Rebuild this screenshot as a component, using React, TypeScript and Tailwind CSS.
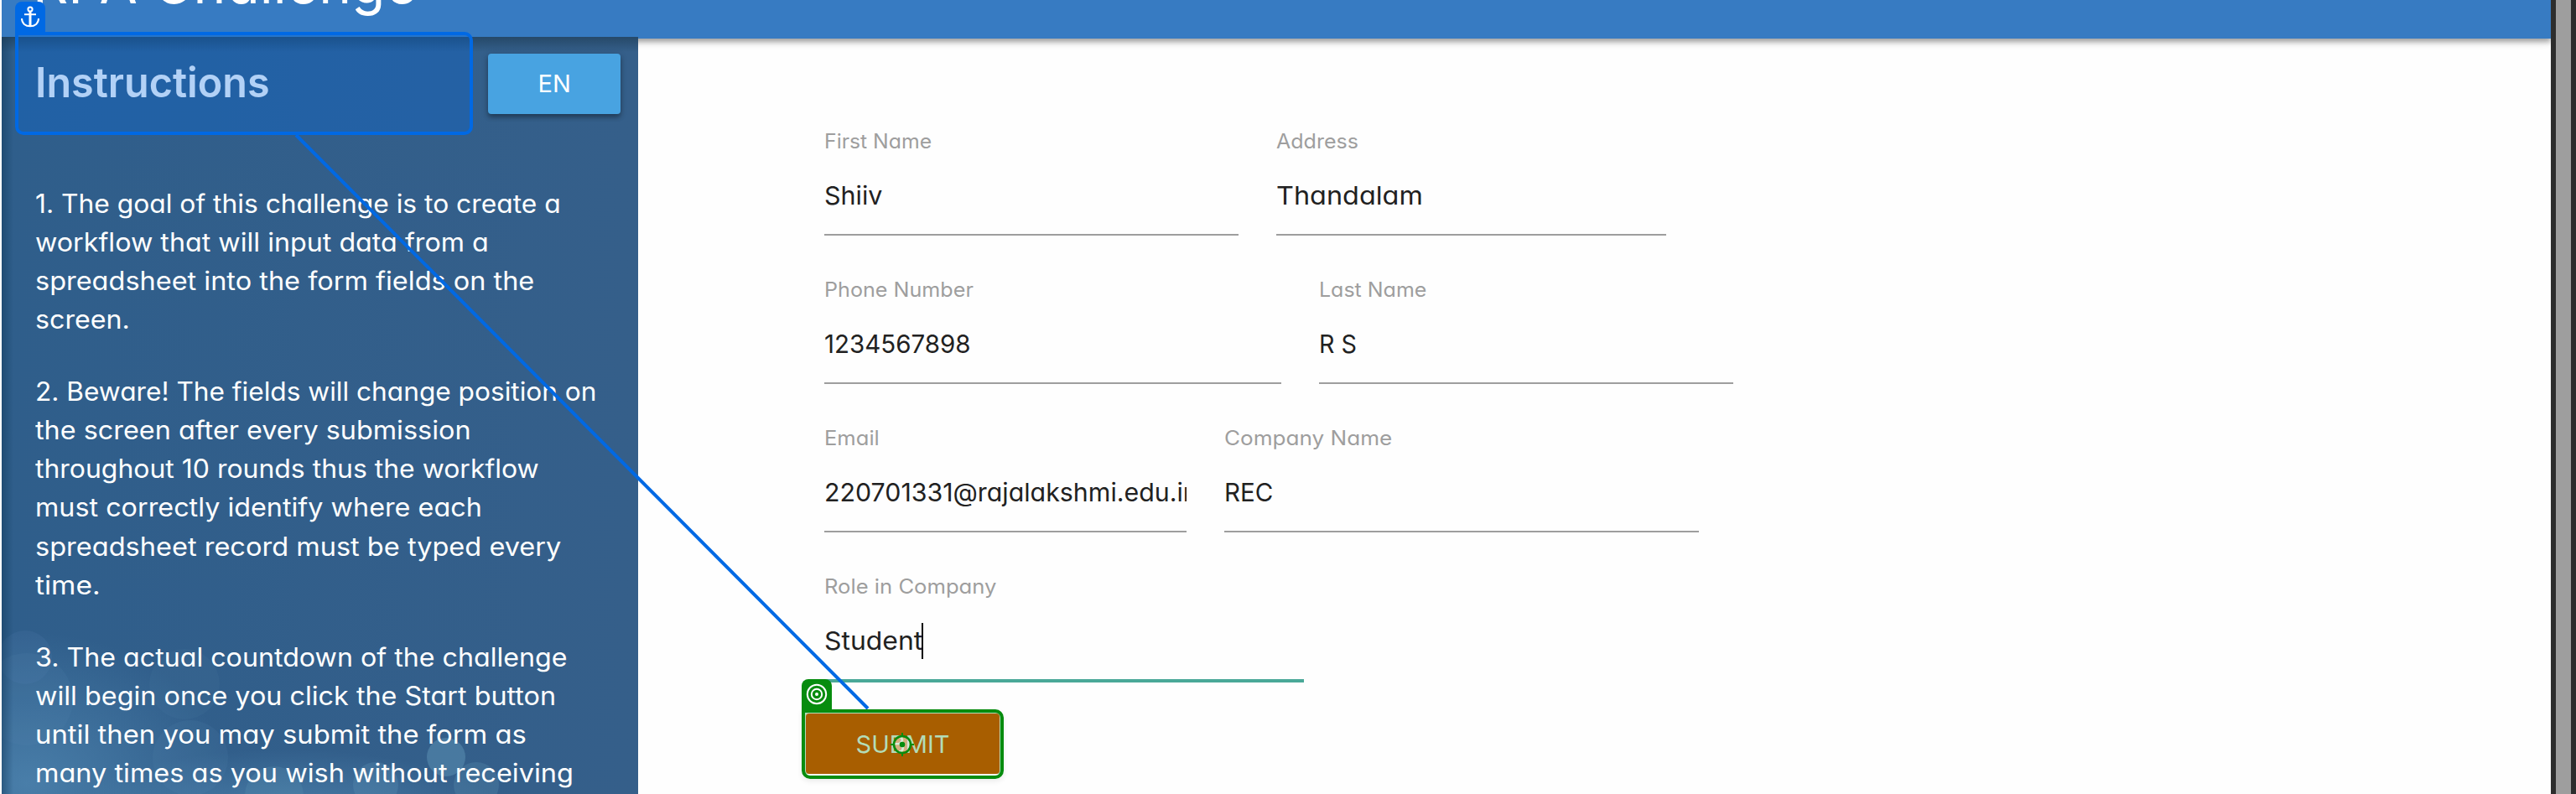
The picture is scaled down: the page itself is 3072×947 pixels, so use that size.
import { useLayoutEffect, useRef } from "react";

/** Single line of text whose glyphs are widened to span the given width. */
function Line({ text, width, className = "" }: { text: string; width: number; className?: string }) {
  const ref = useRef<HTMLSpanElement>(null);
  useLayoutEffect(() => {
    const el = ref.current;
    if (!el) return;
    el.style.transform = `scaleX(${width / el.offsetWidth})`;
  }, [text, width]);
  return (
    <span className={`block shrink-0 whitespace-pre ${className}`} style={{ width }}>
      <span ref={ref} className="inline-block origin-left">{text}</span>
    </span>
  );
}

type LineData = [string, number];

const paragraphs: LineData[][] = [
  [
    ["1. The goal of this challenge is to create a", 627],
    ["workflow that will input data from a", 541],
    ["spreadsheet into the form fields on the", 595],
    ["screen.", 113],
  ],
  [
    ["2. Beware! The fields will change position on", 670],
    ["the screen after every submission", 519],
    ["throughout 10 rounds thus the workflow", 601],
    ["must correctly identify where each", 533],
    ["spreadsheet record must be typed every", 627],
    ["time.", 78],
  ],
  [
    ["3. The actual countdown of the challenge", 635],
    ["will begin once you click the Start button", 621],
    ["until then you may submit the form as", 586],
    ["many times as you wish without receiving", 642],
  ],
];

type FieldData = {
  label: LineData;
  value: LineData;
  box: string;
  focused?: boolean;
};

const rows: FieldData[][] = [
  [
    { label: ["First Name", 128], value: ["Shiiv", 69], box: "w-[494px]" },
    { label: ["Address", 98], value: ["Thandalam", 175], box: "w-[465px]" },
  ],
  [
    { label: ["Phone Number", 178], value: ["1234567898", 175], box: "w-[545px]" },
    { label: ["Last Name", 128], value: ["R S", 45], box: "w-[494px]" },
  ],
  [
    { label: ["Email", 66], value: ["220701331@rajalakshmi.edu.in", 446], box: "w-[432px]" },
    { label: ["Company Name", 200], value: ["REC", 58], box: "w-[566px]" },
  ],
  [{ label: ["Role in Company", 205], value: ["Student", 117], box: "w-[572px]", focused: true }],
];

function Field({ label, value, box, focused }: FieldData) {
  return (
    <label className={`flex h-[177px] flex-col ${box}`}>
      <Line text={label[0]} width={label[1]} className="text-2xl leading-9 text-[#9e9e9e]" />
      <div
        className={`mt-[23px] flex items-start overflow-hidden text-[30px] leading-[46px] text-[#212121] ${
          focused ? "h-[73px] border-b-4 border-[#4aa898]" : "h-[71px] border-b-2 border-[#9e9e9e]"
        }`}
      >
        <Line text={value[0]} width={value[1]} />
        {focused && <span className="mt-0.5 -ml-px h-[43px] w-0.5 shrink-0 bg-black" />}
      </div>
    </label>
  );
}

function Sidebar() {
  return (
    <aside className="relative w-[759px] shrink-0 overflow-hidden bg-linear-to-r from-[#2f5e8b] to-[#355f8a]">
      <svg className="absolute inset-0 h-full w-full" viewBox="0 0 759 903" fill="none">
        <defs>
          <radialGradient id="haze">
            <stop offset="0" stopColor="#5a93bd" stopOpacity="0.6" />
            <stop offset="1" stopColor="#5a93bd" stopOpacity="0" />
          </radialGradient>
          <linearGradient id="edge" x1="0" x2="1" y1="0" y2="0">
            <stop offset="0" stopColor="#123a5c" stopOpacity="0.5" />
            <stop offset="1" stopColor="#123a5c" stopOpacity="0" />
          </linearGradient>
          <linearGradient id="top" x1="0" x2="0" y1="0" y2="1">
            <stop offset="0" stopColor="#1c3a52" stopOpacity="0.6" />
            <stop offset="1" stopColor="#1c3a52" stopOpacity="0" />
          </linearGradient>
        </defs>
        <ellipse cx="30" cy="890" rx="240" ry="180" fill="url(#haze)" />
        <ellipse cx="340" cy="930" rx="260" ry="80" fill="url(#haze)" />
        <circle cx="28" cy="740" r="32" fill="#5a8ab5" opacity="0.14" />
        <circle cx="30" cy="790" r="55" fill="#5a8ab5" opacity="0.12" />
        <circle cx="218" cy="772" r="42" fill="#5a8ab5" opacity="0.1" />
        <circle cx="225" cy="860" r="45" fill="#5a8ab5" opacity="0.12" />
        <circle cx="530" cy="859" r="23" fill="#5d93b5" opacity="0.5" />
        <circle cx="446" cy="892" r="27" fill="#5d93b5" opacity="0.3" />
        <circle cx="566" cy="892" r="27" fill="#5d93b5" opacity="0.28" />
        <circle cx="325" cy="905" r="35" fill="#5d93b5" opacity="0.25" />
        <rect width="14" height="903" fill="url(#edge)" />
        <rect width="759" height="18" fill="url(#top)" />
      </svg>
      <div className="relative flex flex-col pl-10">
        <div className="flex h-44 items-start">
          <div className="w-[540px] pt-[25px]">
            <Line text="Instructions" width={280} className="text-[49px] leading-[60px] font-semibold text-white" />
          </div>
          <button className="mt-5 flex h-[72px] w-[158px] items-center justify-center rounded-sm bg-[#48a3e1] text-[29px] text-white shadow-[0_4px_5px_rgba(0,0,0,0.25),0_2px_8px_rgba(0,0,0,0.2)]">
            <Line text="EN" width={39} />
          </button>
        </div>
        <div className="flex flex-col gap-[39.8px] text-[30.5px] leading-[46.1px] text-white">
          {paragraphs.map((lines, i) => (
            <p key={i}>
              {lines.map(([text, width]) => (
                <Line key={text} text={text} width={width} />
              ))}
            </p>
          ))}
        </div>
      </div>
    </aside>
  );
}

function AnchorOverlay() {
  return (
    <div className="absolute top-[38px] left-[18px] h-[123px] w-[546px] rounded-[10px] rounded-tl-none border-4 border-[#0069e4] bg-[#0069e4]/30 bg-clip-padding">
      <div className="absolute -top-10 -left-1 flex h-10 w-9 justify-center rounded-t-lg bg-[#0069e4] pt-[5px]">
        <svg width="24" height="27" viewBox="0 0 24 27" fill="none" stroke="white" strokeWidth="2">
          <circle cx="12" cy="4" r="2.6" />
          <path d="M12 6.5V24" strokeWidth="3" />
          <path d="M5 10.2h14" />
          <path d="M2 15c0 6 4.500 9.300 10 9.300s10-3.300 10-9.300" />
        </svg>
      </div>
    </div>
  );
}

function TargetOverlay() {
  return (
    <div className="absolute top-[846px] left-[956px] h-[83px] w-[241px] rounded-[10px] rounded-tl-none border-4 border-[#078c0e] shadow-[0_3px_6px_rgba(0,0,0,0.08)]">
      <div className="absolute -top-10 -left-1 flex h-10 w-9 justify-center rounded-t-lg bg-[#078c0e] pt-[5px]">
        <svg width="26" height="26" viewBox="0 0 26 26" fill="none" stroke="white" strokeWidth="2">
          <circle cx="13" cy="13" r="11.2" />
          <circle cx="13" cy="13" r="6.200" />
          <circle cx="13" cy="13" r="2" fill="white" stroke="none" />
        </svg>
      </div>
      <svg className="absolute top-[24px] left-[102px]" width="28" height="28" viewBox="0 0 28 28" fill="none">
        <circle cx="14" cy="14" r="9" fill="#fff" opacity="0.5" />
        <circle cx="14" cy="14" r="10" stroke="#078c0e" strokeWidth="2.500" />
        <path d="M14 0v5M14 23v5M0 14h5M23 14h5" stroke="#078c0e" strokeWidth="2" />
        <circle cx="14" cy="14" r="3.300" fill="#078c0e" />
      </svg>
    </div>
  );
}

export default function App() {
  return (
    <div className="relative flex h-[947px] w-[3072px] overflow-hidden bg-white pl-0.5 font-['Inter','Open_Sans',sans-serif] [font-feature-settings:'cv11']">
      <div className="flex w-[3040px] shrink-0 flex-col overflow-hidden bg-[#fefefe]">
        <header className="relative h-[46px] shrink-0 bg-[#377bc2] shadow-[0_4px_6px_rgba(0,0,0,0.3),0_2px_12px_rgba(0,0,0,0.14)]">
          <div className="-mt-[61px] pl-[37px] text-[70px] leading-[80px] text-white">
            <Line text="RPA Challenge" width={459} />
          </div>
        </header>
        <div className="relative -mt-0.5 flex h-[903px]">
          <Sidebar />
          <main className="flex flex-col items-start pt-[107px] pl-[222px]">
            {rows.map((fields, i) => (
              <div key={i} className="flex h-[177px] gap-[45px]">
                {fields.map((f) => (
                  <Field key={f.label[0]} {...f} />
                ))}
              </div>
            ))}
            <div className="-mt-[11px] -ml-[23px] flex h-[75px] w-[233px] items-center justify-center bg-[#b3dcb7] pt-0.5">
              <button className="flex h-[72px] w-[231px] items-center justify-center rounded-sm bg-[#a85e00] pt-0.5 text-[29px] text-[#b3dcb7]">
                <Line text="SUBMIT" width={112} />
              </button>
            </div>
          </main>
        </div>
      </div>
      <div className="w-1.5 bg-[#2d2d2d]" />
      <div className="w-[18px] bg-[#9e9e9e]" />
      <div className="flex-1 bg-[#2d2d2d]" />

      <svg className="absolute inset-0" width="3072" height="947" fill="none">
        <path d="M353 161L1035 845" stroke="#0069e4" strokeWidth="4" />
      </svg>
      <AnchorOverlay />
      <TargetOverlay />
    </div>
  );
}
